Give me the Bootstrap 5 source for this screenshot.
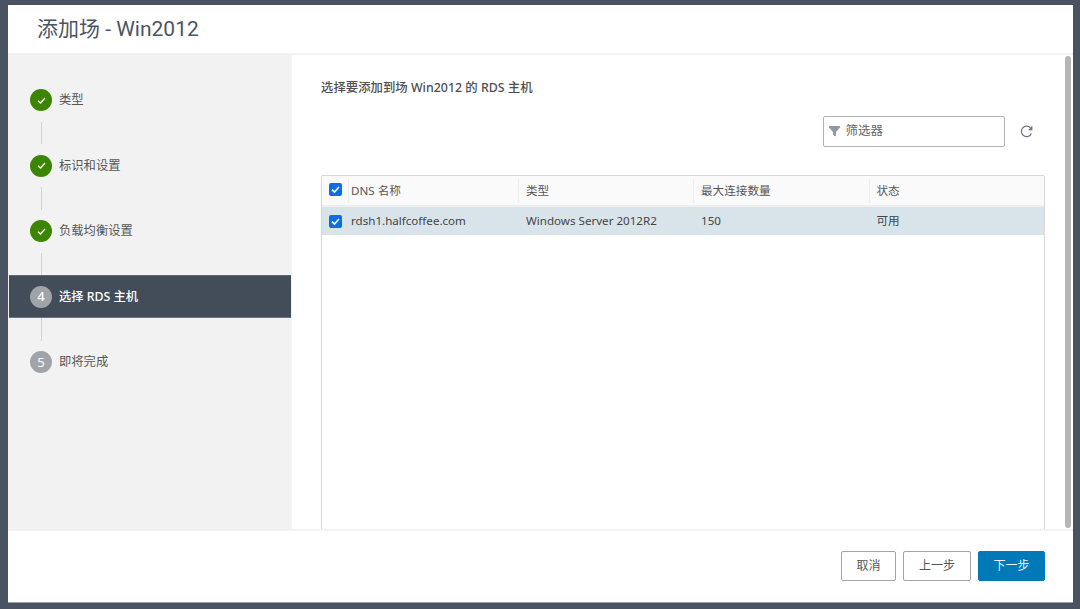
<!DOCTYPE html>
<html lang="zh">
<head>
<meta charset="utf-8">
<title>添加场 - Win2012</title>
<link href="https://cdn.jsdelivr.net/npm/bootstrap@5.3.0/dist/css/bootstrap.min.css" rel="stylesheet">
<style>
html,body{height:609px;overflow:hidden}
body{background:#4a5361;padding:5px 7px 7px 8px;font-family:"Noto Sans","Noto Sans CJK SC",sans-serif;font-size:11.6px;color:#565656}
.wiz{height:597px;background:#fff;box-shadow:0 1px 0 #9aa0a8}
.wiz-head{height:50px;padding:9px 0 0 29px;border-bottom:2px solid #f2f2f2;flex:none}
.wiz-title{font-family:"Roboto","Noto Sans CJK SC",sans-serif;font-size:21px;line-height:30px;color:#4d5561;font-weight:400;margin:0}
.wiz-body{height:474px;flex:none;overflow:hidden}
.wiz-side{width:283.5px;flex:none;background:#f2f2f2;padding-top:23.5px;font-size:12.3px}
.wstep{height:43px;padding-left:22px;gap:7px;color:#565656;line-height:1}
.wstep.on{background:#434d5a;color:#fff;font-weight:500;margin:-.4px 1px 0 1px;padding-left:21px;border-top:1px solid #5e6875;border-bottom:1px solid #6b7480}
.wdot{width:22px;height:22px;border-radius:50%;flex:none}
.wdot.ok{background:#3c8500}
.wdot.num{background:#a0a4a9;color:#fff;font-size:13px}
.wline{width:1px;height:22.7px;background:#d4d4d4;margin-left:33px}
.wmain{min-width:0}
.wpane{padding:25px 20px 0 29.5px;min-width:0}
.wlead{font-size:12.4px;line-height:16px;font-weight:500;color:#4f4f4f;margin:0 0 20px}
.wfilter-row{height:31px;margin-bottom:28px}
.wfilter{width:182px;height:31px;border:1px solid #b3b3b3;border-radius:2px;padding-left:5px;gap:6px;color:#666;font-size:12.5px;margin-right:15px}
.wrefresh{margin-right:12.5px}
.wgrid{width:724px;height:400px;border:1px solid #d7d7d7;border-radius:2px 2px 0 0;background:#fff}
.wgrid-head{height:31px;background:#fafafa;border-bottom:2px solid #eee;color:#565656}
.wgrid-row{height:28px;background:#d9e4ea;color:#444}
.wc{padding-left:7px;height:100%;line-height:1}
.wc1{width:26px}
.wc2{width:170px;padding-left:2px}.wc3{width:175px}.wc4{width:175.5px}.wc5{flex:1}
.wgrid-head .wc:not(.wc1){border-left:1px solid #eee;height:24px}
.wgrid-row .wc2{padding-left:3px}
.wgrid-row .wc3,.wgrid-row .wc4,.wgrid-row .wc5{padding-left:8px}
.wgrid-head .wc1 .wbox{margin-top:-3px}
.wbox{width:13px;height:13px;border-radius:2px;background:#0b6ee8;flex:none;margin-left:-.5px}
.wbar{width:6px;height:472px;background:#b6b6b6;border-radius:3px;margin:1px 2px 0 0;flex:none}
.wfoot{height:73px;flex:none;border-top:2px solid #f2f2f2;padding-right:28px;gap:7px;padding-bottom:1px}
.wbtn{height:30px;padding:0;font-size:12px;border-radius:2px;border:1px solid #a5a5a5;color:#565656;background:#fff;line-height:1}
.wbtn.w1{width:55px}.wbtn.w2{width:68px}.wbtn.w3{width:67px;background:#0079b8;border-color:#0079b8;color:#e8f3f8}
</style>
</head>
<body>
<div class="wiz d-flex flex-column">
  <header class="wiz-head"><h1 class="wiz-title">添加场 - Win2012</h1></header>
  <div class="wiz-body d-flex">
    <nav class="wiz-side">
      <div class="wstep d-flex align-items-center"><span class="wdot ok d-flex align-items-center justify-content-center"><svg width="11" height="11" viewBox="0 0 11 11"><path d="M2 5.8 4.5 8 9 3" fill="none" stroke="#fff" stroke-width="1.3"/></svg></span><span>类型</span></div>
      <div class="wline"></div>
      <div class="wstep d-flex align-items-center"><span class="wdot ok d-flex align-items-center justify-content-center"><svg width="11" height="11" viewBox="0 0 11 11"><path d="M2 5.8 4.5 8 9 3" fill="none" stroke="#fff" stroke-width="1.3"/></svg></span><span>标识和设置</span></div>
      <div class="wline"></div>
      <div class="wstep d-flex align-items-center"><span class="wdot ok d-flex align-items-center justify-content-center"><svg width="11" height="11" viewBox="0 0 11 11"><path d="M2 5.8 4.5 8 9 3" fill="none" stroke="#fff" stroke-width="1.3"/></svg></span><span>负载均衡设置</span></div>
      <div class="wline"></div>
      <div class="wstep on d-flex align-items-center"><span class="wdot num d-flex align-items-center justify-content-center">4</span><span>选择 RDS 主机</span></div>
      <div class="wline"></div>
      <div class="wstep d-flex align-items-center"><span class="wdot num d-flex align-items-center justify-content-center">5</span><span>即将完成</span></div>
    </nav>
    <main class="wmain flex-grow-1 d-flex">
      <div class="wpane flex-grow-1">
        <p class="wlead">选择要添加到场 Win2012 的 RDS 主机</p>
        <div class="wfilter-row d-flex justify-content-end align-items-center">
          <div class="wfilter d-flex align-items-center">
            <svg width="11" height="11" viewBox="0 0 11 11"><path d="M0 0h11v1.5L7 6v4.5L4 9V6L0 1.5z" fill="#8d9aa6"/></svg>
            <span>筛选器</span>
          </div>
          <svg class="wrefresh" width="13" height="13" viewBox="0 0 13 13"><path d="M11.4 8.4A5.2 5.2 0 1 1 10.4 2.8" fill="none" stroke="#6b7480" stroke-width="1.2"/><path d="M12.4 .8v4.4h-4.4z" fill="#6b7480"/></svg>
        </div>
        <div class="wgrid">
          <div class="wgrid-head d-flex align-items-center">
            <div class="wc wc1 d-flex align-items-center"><span class="wbox d-flex align-items-center justify-content-center"><svg width="11" height="11" viewBox="0 0 11 11"><path d="M2 5.6 4.5 8 9 3" fill="none" stroke="#fff" stroke-width="1.6"/></svg></span></div>
            <div class="wc wc2 d-flex align-items-center">DNS 名称</div>
            <div class="wc wc3 d-flex align-items-center">类型</div>
            <div class="wc wc4 d-flex align-items-center">最大连接数量</div>
            <div class="wc wc5 d-flex align-items-center">状态</div>
          </div>
          <div class="wgrid-row d-flex align-items-center">
            <div class="wc wc1 d-flex align-items-center"><span class="wbox d-flex align-items-center justify-content-center"><svg width="11" height="11" viewBox="0 0 11 11"><path d="M2 5.6 4.5 8 9 3" fill="none" stroke="#fff" stroke-width="1.6"/></svg></span></div>
            <div class="wc wc2 d-flex align-items-center">rdsh1.halfcoffee.com</div>
            <div class="wc wc3 d-flex align-items-center">Windows Server 2012R2</div>
            <div class="wc wc4 d-flex align-items-center">150</div>
            <div class="wc wc5 d-flex align-items-center">可用</div>
          </div>
        </div>
      </div>
      <div class="wbar"></div>
    </main>
  </div>
  <footer class="wfoot d-flex justify-content-end align-items-center">
    <button type="button" class="btn wbtn w1">取消</button>
    <button type="button" class="btn wbtn w2">上一步</button>
    <button type="button" class="btn wbtn w3">下一步</button>
  </footer>
</div>
<script src="https://cdn.jsdelivr.net/npm/bootstrap@5.3.0/dist/js/bootstrap.bundle.min.js"></script>
</body>
</html>
